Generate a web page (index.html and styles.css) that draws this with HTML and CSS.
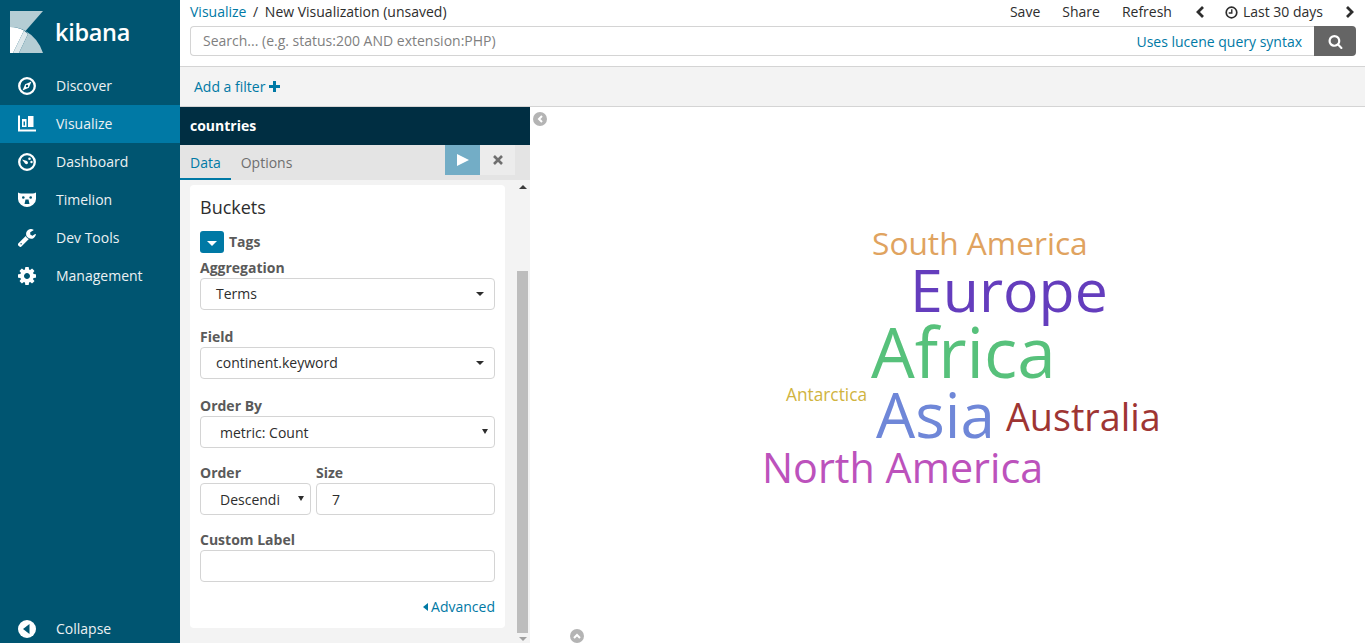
FILE: index.html
```html
<!DOCTYPE html>
<html lang="en">
<head>
  <meta charset="UTF-8">
  <title>New Visualization - Kibana</title>
  <link rel="stylesheet" href="styles.css">
</head>
<body>

<nav class="sidebar">
  <div class="brand">
    <svg class="brand-mark" width="33" height="42" viewBox="0 0 33 42">
      <path fill="#b5cdd4" d="M0 0H33L15.5 20Q9 16 0 16Z"/>
      <path fill="#fff" d="M0 16Q8 16 14 19.500L3 42H0Z"/>
      <path fill="#dfe9ec" d="M14 19.500L18 23L9 42H3Z"/>
      <path fill="#b5cdd4" d="M18 23L15.500 20Q28 27 33 42H9Z"/>
    </svg>
    <span class="brand-name">kibana</span>
  </div>
  <a class="nav-item">
    <svg class="nav-icon" viewBox="1 1 18 18"><circle cx="10" cy="10" r="7.800" fill="none" stroke="#fff" stroke-width="2.300"/><path fill="#fff" d="M14.500 5.500L11.800 11.800L5.500 14.500L8.200 8.200ZM10 8.800A1.200 1.200 0 1 0 10 11.200A1.200 1.200 0 1 0 10 8.800Z" fill-rule="evenodd"/></svg>
    Discover
  </a>
  <a class="nav-item active">
    <svg class="nav-icon" viewBox="1 1 18 18"><path fill="#fff" d="M1 1.500H3V15.500H19V17.500H1ZM5 5H9.500V13H5ZM11 2H16.500V13H11Z"/><path fill="#0079a5" d="M6.500 7.500H8V11.500H6.500Z"/></svg>
    Visualize
  </a>
  <a class="nav-item">
    <svg class="nav-icon" viewBox="1 1 18 18"><circle cx="10" cy="10" r="7.800" fill="none" stroke="#fff" stroke-width="2.300"/><circle cx="12.500" cy="6.800" r="1.300" fill="#fff"/><circle cx="14.500" cy="10" r="1.200" fill="#fff"/><path fill="#fff" d="M5 7.500L10 9Q11.500 10 10.800 11.500Q9.800 12.800 8.300 11.800Z"/></svg>
    Dashboard
  </a>
  <a class="nav-item">
    <svg class="nav-icon" viewBox="1 1 18 18"><path fill="#fff" d="M1 2.500Q3 3.800 5 3.500H15Q17 3.800 19 2.500V9Q19 12.500 16 14.800Q13 17 10 17Q7 17 4 14.800Q1 12.500 1 9Z"/><circle cx="6.300" cy="7.500" r="1.300" fill="#005571"/><circle cx="13.700" cy="7.500" r="1.300" fill="#005571"/><path fill="#005571" d="M8.500 9.500H11.500L12.500 14H7.500Z"/></svg>
    Timelion
  </a>
  <a class="nav-item">
    <svg class="nav-icon" viewBox="100 130 1640 1640"><path fill="#fff" d="M448 1472q0-26-19-45t-45-19-45 19-19 45 19 45 45 19 45-19 19-45zm644-420l-682 682q-37 37-90 37-52 0-91-37l-106-108q-38-36-38-90 0-53 38-91l681-681q39 98 114.500 173.500t173.500 114.500zm634-435q0 39-23 106-47 134-164.500 217.500t-258.500 83.500q-185 0-316.500-131.500t-131.500-316.500 131.500-316.500 316.500-131.500q58 0 121.500 16.500t107.500 46.500q16 11 16 28t-16 28l-293 169v224l193 107q5-3 79-48.500t135.500-81 70.500-35.500q15 0 23.500 10t8.500 25z"/></svg>
    Dev Tools
  </a>
  <a class="nav-item">
    <svg class="nav-icon" viewBox="128 128 1536 1536"><path fill="#fff" d="M1152 896q0-106-75-181t-181-75-181 75-75 181 75 181 181 75 181-75 75-181zm512-109v222q0 12-8 23t-20 13l-185 28q-19 54-39 91 35 50 107 138 10 12 10 25t-9 23q-27 37-99 108t-94 71q-12 0-26-9l-138-108q-44 23-91 38-16 136-29 186-7 28-36 28h-222q-14 0-24.500-8.500t-11.500-21.500l-28-184q-49-16-90-37l-141 107q-10 9-25 9-14 0-25-11-126-114-165-168-7-10-7-23 0-12 8-23 15-21 51-66.500t54-70.500q-27-50-41-99l-183-27q-13-2-21-12.500t-8-23.500v-222q0-12 8-23t19-13l186-28q14-46 39-92-40-57-107-138-10-12-10-24 0-10 9-23 26-36 98.500-107.500t94.500-71.500q13 0 26 10l138 107q44-23 91-38 16-136 29-186 7-28 36-28h222q14 0 24.500 8.500t11.500 21.500l28 184q49 16 90 37l142-107q9-9 24-9 13 0 25 10 129 119 165 170 7 8 7 22 0 12-8 23-15 21-51 66.500t-54 70.500q26 50 41 98l183 28q13 2 21 12.500t8 23.500z"/></svg>
    Management
  </a>
  <a class="nav-item collapse">
    <svg class="nav-icon" viewBox="1 1 18 18"><circle cx="10" cy="10" r="9" fill="#fff"/><path fill="#005571" d="M12.500 5V15L6 10Z"/></svg>
    Collapse
  </a>
</nav>

<div class="main">
  <header class="topbar">
    <div class="topbar-row">
      <div class="crumbs">
        <a class="link">Visualize</a>
        <span class="crumb-sep">/</span>
        <span>New Visualization (unsaved)</span>
      </div>
      <div class="menu">
        <span>Save</span>
        <span>Share</span>
        <span>Refresh</span>
        <div class="timepicker">
          <svg class="chev chev-prev" width="10" height="14" viewBox="0 0 10 14"><path fill="none" stroke="#2d2d2d" stroke-width="2.800" d="M8 2L3 7L8 12"/></svg>
          <span class="range">
            <svg width="13" height="13" viewBox="0 0 14 14"><circle cx="7" cy="7" r="5.700" fill="none" stroke="#2d2d2d" stroke-width="1.800"/><path fill="none" stroke="#2d2d2d" stroke-width="1.500" d="M7.300 3.500V7.500H4"/></svg>
            Last 30 days
          </span>
          <svg class="chev" width="10" height="14" viewBox="0 0 10 14"><path fill="none" stroke="#2d2d2d" stroke-width="2.800" d="M2 2L7 7L2 12"/></svg>
        </div>
      </div>
    </div>
    <div class="searchbar">
      <div class="search-input">
        <span class="placeholder">Search... (e.g. status:200 AND extension:PHP)</span>
        <a class="link lucene">Uses lucene query syntax</a>
      </div>
      <button class="search-btn">
        <svg width="15" height="15" viewBox="0 0 1792 1792"><path fill="#fff" d="M1216 832q0-185-131.500-316.500t-316.500-131.500-316.500 131.500-131.500 316.500 131.500 316.500 316.500 131.500 316.500-131.500 131.500-316.500zm512 832q0 52-38 90t-90 38q-54 0-90-38l-343-342q-179 124-399 124-143 0-273.500-55.500t-225-150-150-225-55.500-273.500 55.500-273.500 150-225 225-150 273.500-55.500 273.500 55.500 225 150 150 225 55.500 273.500q0 220-124 399l343 343q37 37 37 90z"/></svg>
      </button>
    </div>
  </header>

  <div class="filterbar">
    <a class="link">Add a filter</a>
    <svg width="11" height="11" viewBox="0 0 11 11"><path fill="#0079a5" d="M4 0H7V4H11V7H7V11H4V7H0V4H4Z"/></svg>
  </div>

  <div class="editor">
    <section class="panel">
      <div class="panel-title">countries</div>
      <div class="panel-tabs">
        <a class="tab active">Data</a>
        <a class="tab">Options</a>
        <div class="tab-actions">
          <button class="apply-btn"><svg width="12" height="12" viewBox="0 0 12 12"><path fill="#fff" d="M0 0L12 6L0 12Z"/></svg></button>
          <button class="discard-btn"><svg width="10" height="10" viewBox="0 0 10 10"><path fill="none" stroke="#6f6f6f" stroke-width="2.600" d="M1 1L9 9M9 1L1 9"/></svg></button>
        </div>
      </div>
      <div class="panel-body">
        <form class="card">
          <h3>Buckets</h3>
          <div class="agg-head">
            <span class="toggle"><svg width="10" height="5" viewBox="0 0 10 5"><path fill="#fff" d="M0 0H10L5 5Z"/></svg></span>
            <b>Tags</b>
          </div>
          <div class="field">
            <label>Aggregation</label>
            <div class="ui-select">Terms</div>
          </div>
          <div class="field">
            <label>Field</label>
            <div class="ui-select">continent.keyword</div>
          </div>
          <div class="field field-tight">
            <label>Order By</label>
            <div class="select-wrap"><select class="control"><option>metric: Count</option></select></div>
          </div>
          <div class="field-row">
            <div class="field field-tight field-order">
              <label>Order</label>
              <div class="select-wrap"><select class="control"><option>Descending</option></select></div>
            </div>
            <div class="field field-tight field-size">
              <label>Size</label>
              <input class="control" value="7">
            </div>
          </div>
          <div class="field">
            <label>Custom Label</label>
            <input class="control">
          </div>
          <div class="advanced">
            <svg width="5" height="8" viewBox="0 0 5 8"><path fill="#0079a5" d="M5 0V8L0 4Z"/></svg>
            <a class="link">Advanced</a>
          </div>
        </form>
        <div class="scrollbar">
          <span class="arrow-up"></span>
          <span class="thumb"></span>
          <span class="arrow-down"></span>
        </div>
      </div>
    </section>

    <section class="canvas">
      <svg class="cloud" width="835" height="536" viewBox="0 0 835 536">
        <text x="342" y="147.500" font-size="31.700" fill="#e0a35f">South America</text>
        <text x="380" y="205" font-size="59" fill="#643dbd">Europe</text>
        <text x="341" y="271" font-size="69.300" fill="#57c17b">Africa</text>
        <text x="256" y="294" font-size="17.300" fill="#d0b43f">Antarctica</text>
        <text x="346" y="331" font-size="62" fill="#6f87d8">Asia</text>
        <text x="476" y="324" font-size="37.700" fill="#9e3533">Australia</text>
        <text x="232" y="376" font-size="41.300" fill="#bc52bc">North America</text>
      </svg>
      <span class="round-btn btn-left"><svg width="6" height="8" viewBox="0 0 6 8"><path fill="none" stroke="#fff" stroke-width="2" d="M5 1L2 4L5 7"/></svg></span>
      <span class="round-btn btn-up"><svg width="8" height="6" viewBox="0 0 8 6"><path fill="none" stroke="#fff" stroke-width="2" d="M1 5L4 2L7 5"/></svg></span>
    </section>
  </div>
</div>

</body>
</html>
```

FILE: styles.css
```css
* {
  box-sizing: border-box;
}
html, body {
  height: 100%;
}
body {
  margin: 0;
  display: flex;
  height: 643px;
  overflow: hidden;
  font-family: "Open Sans", sans-serif;
  font-size: 14px;
  line-height: 20px;
  color: #2d2d2d;
  background: #fff;
}
.link {
  color: #0079a5;
}

/* sidebar */
.sidebar {
  width: 180px;
  flex: none;
  display: flex;
  flex-direction: column;
  background: #005571;
  color: #ecf1f3;
}
.brand {
  height: 67px;
  display: flex;
  padding: 11px 0 0 10px;
}
.brand-name {
  margin: 5px 0 0 12px;
  font-size: 23.500px;
  font-weight: 600;
  letter-spacing: -0.3px;
  line-height: 32px;
  color: #fff;
}
.nav-item {
  height: 38px;
  flex: none;
  display: flex;
  align-items: center;
  padding-left: 18px;
}
.nav-item.active {
  background: #0079a5;
}
.nav-item.collapse {
  margin-top: auto;
  height: 28px;
}
.nav-icon {
  width: 18px;
  height: 18px;
  margin-right: 20px;
}

/* top */
.main {
  flex: 1;
  min-width: 0;
  display: flex;
  flex-direction: column;
}
.topbar {
  height: 67px;
  flex: none;
  padding: 0 9px 0 10px;
  border-bottom: 1px solid #d4d4d4;
}
.topbar-row {
  height: 26px;
  padding-bottom: 2px;
  display: flex;
  justify-content: space-between;
  align-items: center;
}
.crumb-sep {
  margin: 0 3px 0 3px;
}
.menu {
  display: flex;
  align-items: center;
  gap: 22px;
  margin-right: 1px;
}
.timepicker {
  display: flex;
  align-items: center;
  gap: 21px;
  margin-left: 1px;
}
.chev-prev {
  margin-right: -1px;
}
.range {
  display: flex;
  align-items: center;
  gap: 5px;
  margin-right: 1px;
}
.searchbar {
  display: flex;
  height: 30px;
}
.search-input {
  flex: 1;
  display: flex;
  justify-content: space-between;
  align-items: center;
  padding: 0 12px 0 12px;
  border: 1px solid #d4d4d4;
  border-right: none;
  border-radius: 4px 0 0 4px;
}
.placeholder {
  color: #7f7f7f;
}
.lucene {
  margin: 2px 0 0;
}
.search-btn {
  width: 42px;
  border: none;
  border-radius: 0 4px 4px 0;
  background: #656565;
  display: flex;
  align-items: center;
  justify-content: center;
}
.filterbar {
  height: 40px;
  flex: none;
  display: flex;
  align-items: center;
  gap: 4px;
  padding-left: 14px;
  background: #f3f3f3;
  border-bottom: 1px solid #d4d4d4;
}

/* editor */
.editor {
  flex: 1;
  min-height: 0;
  display: flex;
}
.panel {
  width: 350px;
  flex: none;
  display: flex;
  flex-direction: column;
  background: #f3f3f3;
}
.panel-title {
  height: 38px;
  flex: none;
  padding: 9px 10px;
  background: #002e42;
  color: #fff;
  font-weight: 700;
}
.panel-tabs {
  height: 35px;
  flex: none;
  display: flex;
  background: #e4e4e4;
}
.tab {
  padding: 8px 10px 0;
  color: #6f6f6f;
}
.tab.active {
  color: #0079a5;
  border-bottom: 2px solid #0079a5;
}
.tab-actions {
  display: flex;
  height: 30px;
  margin: 0 15px 0 auto;
}
.tab-actions button {
  width: 35px;
  border: none;
  padding: 0;
  display: flex;
  align-items: center;
  justify-content: center;
}
.apply-btn {
  background: #73adc6;
}
.discard-btn {
  background: #ececec;
}
.panel-body {
  flex: 1;
  min-height: 0;
  display: flex;
  padding: 5px 1px 0 10px;
}
.card {
  width: 315px;
  height: 443px;
  flex: none;
  padding: 10px;
  background: #fff;
  border-radius: 4px;
}
.card h3 {
  margin: 0;
  height: 26px;
  font-size: 18px;
  font-weight: 400;
  line-height: 24px;
}
.agg-head {
  display: flex;
  align-items: center;
  gap: 5px;
  height: 22px;
  margin: 10px 0 5px;
  color: #5a5a5a;
}
.toggle {
  width: 24px;
  height: 22px;
  display: flex;
  align-items: center;
  justify-content: center;
  padding-top: 3px;
  background: #0079a5;
  border-radius: 3px;
}
.field {
  margin-bottom: 17px;
}
.field-tight {
  margin-bottom: 15px;
}
.field label {
  display: block;
  height: 20px;
  font-weight: 700;
  color: #5a5a5a;
}
.field-row {
  display: flex;
  gap: 5px;
}
.field-order {
  width: 111px;
  flex: none;
}
.field-size {
  flex: 1;
}
.control, .ui-select {
  display: block;
  width: 100%;
  height: 32px;
  padding: 5px 15px;
  font-family: inherit;
  font-size: 14px;
  color: #2d2d2d;
  background-color: #fff;
  border: 1px solid #d4d4d4;
  border-radius: 4px;
  outline: none;
}
select.control {
  appearance: none;
  padding: 5px 30px 5px 19px;
}
.select-wrap {
  position: relative;
}
.select-wrap::after {
  content: "";
  position: absolute;
  right: 7px;
  top: 13px;
  border-top: 5px solid #2d2d2d;
  border-left: 3px solid transparent;
  border-right: 3px solid transparent;
}
.ui-select {
  position: relative;
  line-height: 20px;
}
.ui-select::after {
  content: "";
  position: absolute;
  right: 10px;
  top: 13px;
  border-top: 4px solid #2d2d2d;
  border-left: 4px solid transparent;
  border-right: 4px solid transparent;
}
.advanced {
  display: flex;
  justify-content: flex-end;
  align-items: center;
  gap: 3px;
  margin-top: -2px;
}

/* fake scrollbar, same look as chrome on linux */
.scrollbar {
  width: 13px;
  margin: -5px 0 0 11px;
  display: flex;
  flex-direction: column;
  align-items: center;
  position: relative;
}
.arrow-up {
  margin-top: 5px;
  border-bottom: 4px solid #3c3c3c;
  border-left: 4px solid transparent;
  border-right: 4px solid transparent;
}
.thumb {
  width: 11px;
  height: 362px;
  margin-top: 82px;
  background: #bdbdbd;
}
.arrow-down {
  margin-top: 4px;
  border-top: 4px solid #a0a0a0;
  border-left: 4px solid transparent;
  border-right: 4px solid transparent;
}

/* word cloud */
.canvas {
  flex: 1;
  position: relative;
  overflow: hidden;
}
.cloud {
  display: block;
}
.cloud text {
  font-family: "Open Sans", sans-serif;
}
.round-btn {
  position: absolute;
  width: 14px;
  height: 14px;
  border-radius: 50%;
  background: #b4b4b4;
  display: flex;
  align-items: center;
  justify-content: center;
}
.btn-left {
  left: 3px;
  top: 5px;
}
.btn-up {
  left: 40px;
  top: 522px;
}
```
